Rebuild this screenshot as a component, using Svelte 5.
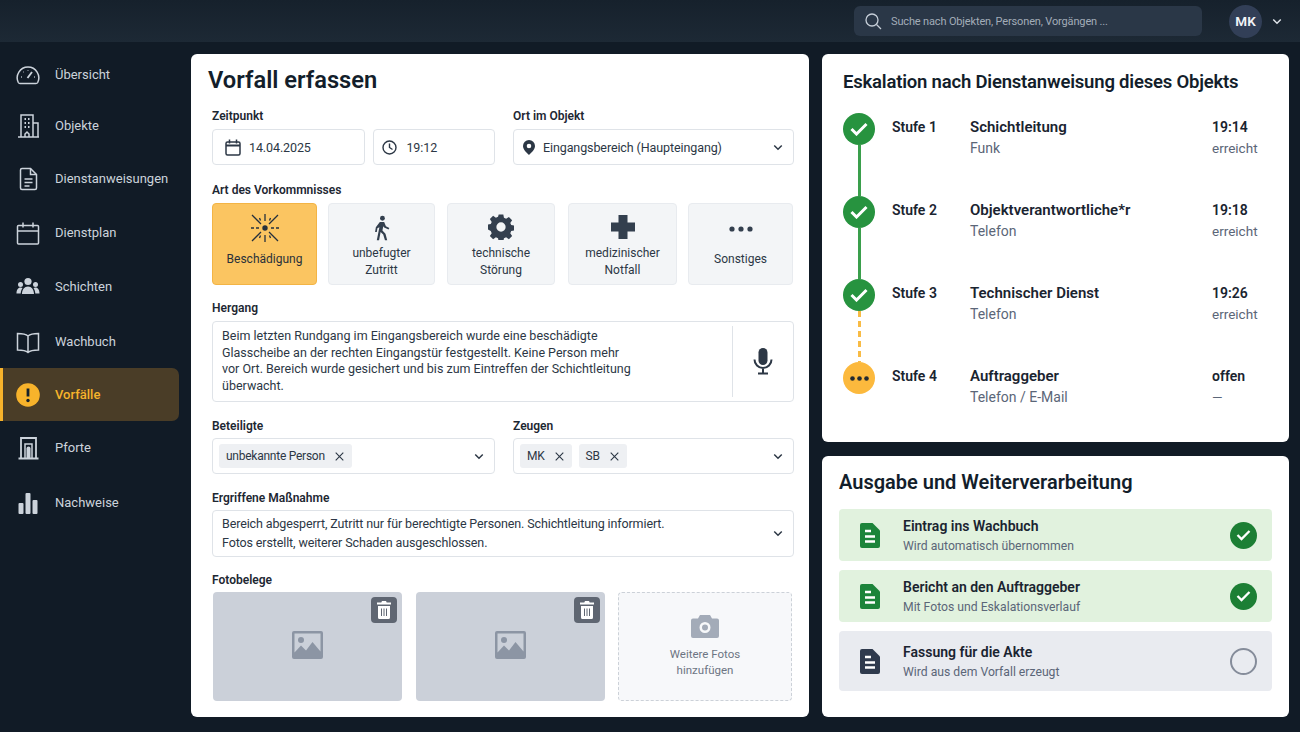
<script>
  const nav = [
    { id: 'gauge', label: 'Übersicht', gap: 0 },
    { id: 'building', label: 'Objekte', gap: -2 },
    { id: 'doc', label: 'Dienstanweisungen', gap: 0 },
    { id: 'cal', label: 'Dienstplan', gap: 1 },
    { id: 'people', label: 'Schichten', gap: 1 },
    { id: 'book', label: 'Wachbuch', gap: 2 },
    { id: 'alert', label: 'Vorfälle', active: true, gap: 0 },
    { id: 'gate', label: 'Pforte', gap: 0 },
    { id: 'bars', label: 'Nachweise', gap: 2 }
  ];

  const kinds = [
    { id: 'burst', lines: ['Beschädigung'], on: true, w: 105, gap: 0 },
    { id: 'walk', lines: ['unbefugter', 'Zutritt'], w: 107, gap: 11 },
    { id: 'gear', lines: ['technische', 'Störung'], w: 108, gap: 12 },
    { id: 'plus', lines: ['medizinischer', 'Notfall'], w: 109, gap: 13 },
    { id: 'dots', lines: ['Sonstiges'], w: 105, gap: 11 }
  ];

  const steps = [
    { n: 'Stufe 1', who: 'Schichtleitung', how: 'Funk', time: '19:14', state: 'erreicht', done: true },
    { n: 'Stufe 2', who: 'Objektverantwortliche*r', how: 'Telefon', time: '19:18', state: 'erreicht', done: true },
    { n: 'Stufe 3', who: 'Technischer Dienst', how: 'Telefon', time: '19:26', state: 'erreicht', done: true },
    { n: 'Stufe 4', who: 'Auftraggeber', how: 'Telefon / E-Mail', time: 'offen', state: '—', done: false }
  ];

  const outputs = [
    { title: 'Eintrag ins Wachbuch', sub: 'Wird automatisch übernommen', done: true, h: 52 },
    { title: 'Bericht an den Auftraggeber', sub: 'Mit Fotos und Eskalationsverlauf', done: true, h: 52 },
    { title: 'Fassung für die Akte', sub: 'Wird aus dem Vorfall erzeugt', done: false, h: 60 }
  ];
</script>

{#snippet chevron()}
  <svg class="chev" width="10" height="7" viewBox="0 0 12 8" fill="none" stroke="currentColor" stroke-width="1.800"><path d="M1.500 1.500 6 6l4.500-4.500" /></svg>
{/snippet}

{#snippet cross()}
  <svg width="9" height="9" viewBox="0 0 9 9" fill="none" stroke="#2c3745" stroke-width="1.100"><path d="m.7.7 7.600 7.600M8.300.7.700 8.300" /></svg>
{/snippet}

{#snippet fileIcon()}
  <svg width="20" height="25" viewBox="0 0 20 25"><path fill="currentColor" d="M2 0h10.500L20 7.500V23a2 2 0 0 1-2 2H2a2 2 0 0 1-2-2V2a2 2 0 0 1 2-2z" /><path fill="none" stroke="#fff" stroke-width="2.400" d="M5 8h6M5 13.500h10M5 18.500h10" /></svg>
{/snippet}

{#snippet navIcon(id)}
  <svg width="26" height="26" viewBox="0 0 26 26" fill="none" stroke="currentColor" stroke-width="1.500">
    {#if id === 'gauge'}
      <path d="M5 21.500h16a2 2 0 0 0 1.700-1A10.800 10.800 0 0 0 13 5 10.800 10.800 0 0 0 3.300 20.500a2 2 0 0 0 1.700 1z" />
      <path d="m12.500 16 4.500-6" stroke-width="1.800" /><path d="M6 15h.8M8.500 10h.5M13 8v.6M20 15h-.8" />
    {:else if id === 'building'}
      <path d="M6 24V2h12v22M18 10h5v14M3 24h21" />
      <path d="M9.500 6h1.500M13 6h1.500M9.500 10h1.500M13 10h1.500M9.500 14h1.500M13 14h1.500" stroke-width="1.800" /><path d="M10 24v-3l2-2 2 2v3" />
    {:else if id === 'doc'}
      <path d="M7 2.500h8.500l6 6V22a1.500 1.500 0 0 1-1.500 1.500H7A1.500 1.500 0 0 1 5.500 22V4A1.500 1.500 0 0 1 7 2.500z" /><path d="M15.500 2.500v6h6M9.500 13h8M9.500 16.500h8M9.500 20h5" />
    {:else if id === 'cal'}
      <path d="M3.500 5.500h19a1 1 0 0 1 1 1V23a1 1 0 0 1-1 1h-19a1 1 0 0 1-1-1V6.500a1 1 0 0 1 1-1zM2.500 11h21M8 2.500v5M18 2.500v5" />
    {:else if id === 'people'}
      <g fill="currentColor" stroke="none"><circle cx="13" cy="7.500" r="3.600" /><circle cx="5.500" cy="10.500" r="2.500" /><circle cx="20.500" cy="10.500" r="2.500" /><path d="M7 20c0-4.500 2.500-7.500 6-7.500s6 3 6 7.500zM1.500 19.500c0-3.500 1.500-6 4-6 .8 0 1.500.2 2 .6-1 1.500-1.700 3.300-1.800 5.400zM24.500 19.500c0-3.500-1.500-6-4-6-.8 0-1.500.2-2 .6 1 1.500 1.700 3.300 1.800 5.400z" /></g>
    {:else if id === 'book'}
      <path d="M13 7c-2-1.800-5-2.500-10.500-2.500V21c5 0 8.500.7 10.500 2.500 2-1.800 5.500-2.500 10.500-2.500V4.500C18 4.500 15 5.200 13 7zM13 7v16.500" />
    {:else if id === 'alert'}
      <circle cx="13" cy="13" r="11.800" fill="#f7b32b" stroke="none" />
      <path d="M13 6.500v8" stroke="#14202c" stroke-width="2.800" /><circle cx="13" cy="18.500" r="1.700" fill="#14202c" stroke="none" />
    {:else if id === 'gate'}
      <path d="M6 23V3h15v20M3.500 23.500h20" stroke-width="1.800" /><path d="M10 23V9h7v14" /><path d="M11.500 23v-9.500a2 2 0 0 1 4 0V23z" fill="currentColor" stroke="none" />
    {:else if id === 'bars'}
      <g fill="currentColor" stroke="none"><rect x="3.500" y="13" width="5" height="11" rx="1" /><rect x="10.500" y="3" width="5" height="21" rx="1" /><rect x="17.500" y="10" width="5" height="14" rx="1" /></g>
    {/if}
  </svg>
{/snippet}

{#snippet kindIcon(id)}
  {#if id === 'burst'}
    <svg width="30" height="30" viewBox="0 0 30 30" fill="none" stroke="#25303c" stroke-width="1.300"><circle cx="15" cy="15" r="2.700" fill="#25303c" stroke="none" /><path d="M15 1v7M15 22v7M1 15h3M6 15h3M21 15h3M26 15h3M2 2l9 9M28 2l-9 9M2 28l9-9M28 28l-9-9M9.500 5l1 2.500M20.500 5l-1 2.500M9.500 25l1-2.500M20.500 25l-1-2.500" /></svg>
  {:else if id === 'walk'}
    <svg width="26" height="26" viewBox="0 0 30 30" fill="#333f4e"><circle cx="15.500" cy="3.800" r="2.800" /><path d="M12.500 8h5l2 5 4 2-1 1.800-5-2.300-1-1.500-1 5 3.500 3.500 2 7.500h-2.600l-2-6.500-3-3-1.800 9.500H9l3-15-2.300 1.300-.7 4.200H7l.9-5.500z" /></svg>
  {:else if id === 'gear'}
    <svg class="up" width="26" height="26" viewBox="0 0 28 28"><path fill="#333f4e" fill-rule="evenodd" d="M11.500 1h5l.7 3.600 2.300 1 3-2 3.500 3.500-2 3 1 2.300 3.500.7v5l-3.500.7-1 2.300 2 3-3.500 3.500-3-2-2.300 1-.7 3.500h-5l-.7-3.500-2.300-1-3 2-3.500-3.500 2-3-1-2.300L-.5 17v-5l3.500-.7 1-2.300-2-3L5.500 2.500l3 2 2.300-1zM14 9.500a5 5 0 1 0 0 10 5 5 0 0 0 0-10z" transform="translate(0 -.5)" /></svg>
  {:else if id === 'plus'}
    <svg class="up" width="26" height="26" viewBox="0 0 26 26"><path fill="#333f4e" d="M8.500 1h9v7.500H25v9h-7.500V25h-9v-7.500H1v-9h7.500z" /></svg>
  {:else}
    <svg width="24" height="26" viewBox="0 0 24 26" fill="#333f4e"><circle cx="3" cy="14" r="2.600" /><circle cx="12" cy="14" r="2.600" /><circle cx="21" cy="14" r="2.600" /></svg>
  {/if}
{/snippet}

{#snippet photo()}
  <div class="photo">
    <button class="trash" aria-label="Foto löschen">
      <svg width="14" height="18" viewBox="0 0 14 18"><path fill="#fff" d="M5 0h4l.7 1.500H14v2H0v-2h4.300zM1 5h12v11.500a1.500 1.500 0 0 1-1.500 1.500h-9A1.500 1.500 0 0 1 1 16.500z" /><path stroke="#5f6672" stroke-width="1" d="M4.500 7.500v7.500M7 7.500v7.500M9.500 7.500v7.500" /></svg>
    </button>
    <svg class="pic" width="31" height="28" viewBox="0 0 31 28"><path fill="#8c95a4" fill-rule="evenodd" d="M2 0h27a2 2 0 0 1 2 2v24a2 2 0 0 1-2 2H2a2 2 0 0 1-2-2V2a2 2 0 0 1 2-2zm.5 2.500v19l6.500-7 5 5 6.500-8.500 8 9.500v-18z" /><circle cx="9" cy="9" r="3" fill="#8c95a4" /></svg>
  </div>
{/snippet}

<div class="shell">
  <header class="top">
    <div class="search">
      <svg width="17" height="17" viewBox="0 0 17 17" fill="none" stroke="#c6ced8" stroke-width="1.300"><circle cx="7" cy="7" r="6" /><path d="m11.500 11.500 4.500 4.500" /></svg>
      <span>Suche nach Objekten, Personen, Vorgängen ...</span>
    </div>
    <div class="avatar">MK</div>
    <span class="topchev">{@render chevron()}</span>
  </header>

  <div class="body">
    <nav class="side">
      {#each nav as item}
        <a class="navitem" class:active={item.active} href="#{item.id}" style="margin-top: {item.gap}px">
          <span class="navicon">{@render navIcon(item.id)}</span>
          <span>{item.label}</span>
        </a>
      {/each}
    </nav>

    <main class="panel form">
      <h1>Vorfall erfassen</h1>

      <div class="row two">
        <div>
          <div class="lab">Zeitpunkt</div>
          <div class="pair">
            <div class="field date">
              <svg width="16" height="17" viewBox="0 0 16 17" fill="none" stroke="#2c3745" stroke-width="1.500"><rect x="1" y="3" width="14" height="13" rx="1.500" /><path d="M1 6.500h14" stroke-width="2" /><path d="M4.500 .5v4M11.500 .5v4" /></svg>
              <span>14.04.2025</span>
            </div>
            <div class="field time">
              <svg width="15" height="15" viewBox="0 0 15 15" fill="none" stroke="#2c3745" stroke-width="1.400"><circle cx="7.500" cy="7.500" r="6.500" /><path d="M7.500 3.500v4l3 2" /></svg>
              <span>19:12</span>
            </div>
          </div>
        </div>
        <div>
          <div class="lab">Ort im Objekt</div>
          <div class="field place">
            <svg width="12" height="15" viewBox="0 0 12 15"><path fill="#2c3745" fill-rule="evenodd" d="M6 0a6 6 0 0 1 6 6c0 3.500-3.500 6.500-6 9-2.500-2.500-6-5.500-6-9a6 6 0 0 1 6-6zm0 3.700a2.300 2.300 0 1 0 0 4.600 2.300 2.300 0 0 0 0-4.600z" /></svg>
            <span>Eingangsbereich (Haupteingang)</span>
            {@render chevron()}
          </div>
        </div>
      </div>

      <div class="lab art">Art des Vorkommnisses</div>
      <div class="kinds">
        {#each kinds as k}
          <button class="kind" class:on={k.on} style="width: {k.w}px; margin-left: {k.gap}px">
            <span class="kicon">{@render kindIcon(k.id)}</span>
            <span class="ktext" class:one={k.lines.length === 1}>{#each k.lines as l}<span>{l}</span>{/each}</span>
          </button>
        {/each}
      </div>

      <div class="lab story">Hergang</div>
      <div class="storybox">
        <p>Beim letzten Rundgang im Eingangsbereich wurde eine beschädigte<br />Glasscheibe an der rechten Eingangstür festgestellt. Keine Person mehr<br />vor Ort. Bereich wurde gesichert und bis zum Eintreffen der Schichtleitung<br />überwacht.</p>
        <div class="mic">
          <svg width="20" height="27" viewBox="0 0 20 27"><rect x="5.500" y="0" width="9" height="17" rx="4.500" fill="#2c3745" /><path d="M1.500 11.500a8.500 8.500 0 0 0 17 0M10 20v5M5 25.500h10" fill="none" stroke="#2c3745" stroke-width="2" /></svg>
        </div>
      </div>

      <div class="row two people">
        <div>
          <div class="lab">Beteiligte</div>
          <div class="field tags">
            <span class="tag">unbekannte Person {@render cross()}</span>
            {@render chevron()}
          </div>
        </div>
        <div>
          <div class="lab">Zeugen</div>
          <div class="field tags">
            <span class="tag">MK {@render cross()}</span>
            <span class="tag">SB {@render cross()}</span>
            {@render chevron()}
          </div>
        </div>
      </div>

      <div class="lab measure">Ergriffene Maßnahme</div>
      <div class="measurebox">
        <p>Bereich abgesperrt, Zutritt nur für berechtigte Personen. Schichtleitung informiert.<br />Fotos erstellt, weiterer Schaden ausgeschlossen.</p>
        {@render chevron()}
      </div>

      <div class="lab fotos">Fotobelege</div>
      <div class="photos">
        {@render photo()}
        {@render photo()}
        <div class="addphoto">
          <svg width="28" height="23" viewBox="0 0 28 23"><path fill="#a3abb8" fill-rule="evenodd" d="M9 0h10l2 3.500h5a2 2 0 0 1 2 2V21a2 2 0 0 1-2 2H2a2 2 0 0 1-2-2V5.500a2 2 0 0 1 2-2h5zm5 7a5.500 5.500 0 1 0 0 11 5.500 5.500 0 0 0 0-11zm0 2.500a3 3 0 1 1 0 6 3 3 0 0 1 0-6z" /></svg>
          <span>Weitere Fotos<br />hinzufügen</span>
        </div>
      </div>
    </main>

    <div class="right">
      <section class="panel esc">
        <h2>Eskalation nach Dienstanweisung dieses Objekts</h2>
        <div class="steps">
          {#each steps as s, i}
            <div class="step">
              <div class="rail">
                <span class="node" class:open={!s.done}>
                  {#if s.done}
                    <svg width="18" height="14" viewBox="0 0 18 14" fill="none" stroke="#fff" stroke-width="3"><path d="m1.500 7 5 5 10-10" /></svg>
                  {:else}
                    <svg width="19" height="5" viewBox="0 0 19 5" fill="#232a31"><circle cx="2.500" cy="2.500" r="2.300" /><circle cx="9.500" cy="2.500" r="2.300" /><circle cx="16.500" cy="2.500" r="2.300" /></svg>
                  {/if}
                </span>
                {#if i < steps.length - 1}
                  <span class="link" class:dashed={i === 2}></span>
                {/if}
              </div>
              <div class="stufe">{s.n}</div>
              <div class="who"><b>{s.who}</b><small>{s.how}</small></div>
              <div class="when"><b>{s.time}</b><small>{s.state}</small></div>
            </div>
          {/each}
        </div>
      </section>

      <section class="panel out">
        <h2>Ausgabe und Weiterverarbeitung</h2>
        <div class="outs">
          {#each outputs as o}
            <div class="outrow" class:done={o.done} style="height: {o.h}px">
              <span class="outicon">{@render fileIcon()}</span>
              <div class="outtext"><b>{o.title}</b><small>{o.sub}</small></div>
              {#if o.done}
                <span class="tick"><svg width="15" height="12" viewBox="0 0 15 12" fill="none" stroke="#fff" stroke-width="2.300"><path d="m1.500 6 4 4 8-8" /></svg></span>
              {:else}
                <span class="ring"></span>
              {/if}
            </div>
          {/each}
        </div>
      </section>
    </div>
  </div>
</div>

<style>
  :global(body) {
    margin: 0;
    background: #101a25;
    overflow: hidden;
  }

  .shell {
    width: 1300px;
    height: 732px;
    overflow: hidden;
    background: #111b26;
    font-family: Roboto, "Liberation Sans", sans-serif;
    color: #1a2430;
  }

  small {
    display: block;
    font-size: 14px;
  }

  /* top bar */
  .top {
    height: 42px;
    display: flex;
    align-items: center;
    background: linear-gradient(#16212c, #1d2935);
    box-sizing: border-box;
    padding-left: 854px;
  }

  .search {
    width: 348px;
    height: 30px;
    box-sizing: border-box;
    padding-left: 11px;
    display: flex;
    align-items: center;
    gap: 9px;
    background: #2a3747;
    border-radius: 6px;
    color: #a2acb8;
    font-size: 11px;
    letter-spacing: -0.15px;
  }

  .avatar {
    width: 33px;
    height: 33px;
    margin-left: 27px;
    border-radius: 50%;
    background: #323f57;
    color: #f2f4f7;
    font-size: 13.500px;
    font-weight: 600;
    display: flex;
    align-items: center;
    justify-content: center;
  }

  .topchev {
    margin-left: 10px;
    color: #dfe4ea;
    display: flex;
  }

  .body {
    display: flex;
    align-items: flex-start;
  }

  /* sidebar */
  .side {
    width: 191px;
    flex: none;
    padding-top: 6px;
  }

  .navitem {
    height: 53px;
    width: 179px;
    box-sizing: border-box;
    display: flex;
    align-items: center;
    gap: 14px;
    padding-left: 15px;
    color: #ccd3db;
    font-size: 13px;
    text-decoration: none;
  }

  .navicon {
    display: flex;
  }

  .navitem.active {
    background: #4a3d27;
    border-left: 3px solid #f7b32b;
    padding-left: 12px;
    border-radius: 0 7px 7px 0;
    color: #f7b32b;
    font-weight: 500;
  }

  .panel {
    background: #fff;
    border-radius: 6px;
    box-sizing: border-box;
  }

  /* form */
  .form {
    width: 618px;
    height: 663px;
    margin-top: 12px;
    padding: 0 15px 0 21px;
    flex: none;
  }

  h1 {
    margin: 0 0 0 -4px;
    padding-top: 11px;
    font-size: 23.700px;
    line-height: 30px;
    font-weight: 600;
    color: #131e2b;
  }

  .lab {
    font-size: 12px;
    font-weight: 600;
    line-height: 16px;
    color: #1d2732;
  }

  .row.two {
    display: grid;
    grid-template-columns: 283px 281px;
    gap: 18px;
    margin-top: 13px;
  }

  .row .lab {
    margin-bottom: 5px;
  }

  .pair {
    display: flex;
    gap: 8px;
  }

  .field {
    height: 36px;
    box-sizing: border-box;
    border: 1px solid #dfe3e8;
    border-radius: 4px;
    display: flex;
    align-items: center;
    font-size: 12.500px;
    letter-spacing: -0.1px;
    color: #2c3745;
    background: #fff;
  }

  .date {
    width: 154px;
    padding-left: 12px;
    gap: 8px;
  }

  .time {
    width: 122px;
    padding-left: 8px;
    gap: 9px;
  }

  .place {
    padding: 0 10px 0 9px;
    gap: 8px;
  }

  .place span {
    flex: 1;
  }

  .chev {
    flex: none;
    color: #2c3745;
  }

  .topchev .chev {
    color: #dfe4ea;
  }

  .art {
    margin-top: 17px;
  }

  .kinds {
    display: flex;
    margin-top: 5px;
  }

  .kind {
    height: 82px;
    padding: 0;
    box-sizing: border-box;
    border: 1px solid #e8ebef;
    border-radius: 4px;
    background: #f3f5f7;
    font: inherit;
    font-size: 12px;
    color: #2c3745;
    display: flex;
    flex-direction: column;
    align-items: center;
  }

  .kind.on {
    background: #fbc561;
    border-color: #f3b445;
    color: #29313a;
  }

  .kicon {
    height: 30px;
    margin-top: 9px;
    display: flex;
    align-items: center;
  }

  .kicon :global(svg.up) {
    margin-top: -2px;
  }

  .ktext {
    flex: 1;
    display: flex;
    flex-direction: column;
    justify-content: center;
    line-height: 17px;
    margin-bottom: 3px;
  }

  .ktext.one {
    margin-bottom: 9px;
  }

  .story {
    margin-top: 15px;
  }

  .storybox {
    margin-top: 5px;
    height: 81px;
    box-sizing: border-box;
    border: 1px solid #dfe3e8;
    border-radius: 4px;
    display: flex;
  }

  .storybox p {
    margin: 0;
    flex: 1;
    padding: 6px 0 0 9px;
    font-size: 12.500px;
    line-height: 16.500px;
    color: #2c3745;
  }

  .mic {
    width: 60px;
    margin: 4px 0;
    border-left: 1px solid #dfe3e8;
    display: flex;
    align-items: center;
    justify-content: center;
  }

  .row.two.people {
    margin-top: 16px;
  }

  .people .lab {
    margin-bottom: 4px;
  }

  .tags {
    padding: 0 10px 0 6px;
    gap: 7px;
  }

  .tags .chev {
    margin-left: auto;
  }

  .tag {
    height: 24px;
    padding: 0 8px 0 7px;
    background: #eef0f3;
    border-radius: 3px;
    display: flex;
    align-items: center;
    gap: 10px;
    font-size: 12px;
    letter-spacing: -0.25px;
    white-space: nowrap;
  }

  .measure {
    margin-top: 16px;
  }

  .measurebox {
    margin-top: 4px;
    height: 47px;
    box-sizing: border-box;
    border: 1px solid #dfe3e8;
    border-radius: 4px;
    padding: 0 10px 0 9px;
    display: flex;
    align-items: center;
    justify-content: space-between;
  }

  .measurebox p {
    margin: 0;
    font-size: 12.500px;
    letter-spacing: -0.12px;
    line-height: 18.500px;
    color: #2c3745;
  }

  .fotos {
    margin-top: 15px;
  }

  .photos {
    margin: 4px 1px 0;
    display: grid;
    grid-template-columns: 189px 189px 174px;
    gap: 14px 13.500px;
  }

  .photo {
    position: relative;
    height: 109px;
    background: #cbd0d9;
    border-radius: 4px;
    display: flex;
    align-items: center;
    justify-content: center;
  }

  .photo :global(svg.pic) {
    margin-top: -3px;
  }

  .trash {
    position: absolute;
    top: 5px;
    right: 5px;
    width: 26px;
    height: 26px;
    padding: 0;
    border: 0;
    border-radius: 4px;
    background: #5f6672;
    display: flex;
    align-items: center;
    justify-content: center;
  }

  .addphoto {
    height: 109px;
    box-sizing: border-box;
    border: 1px dashed #ccd1d8;
    border-radius: 4px;
    background: #f7f8fa;
    display: flex;
    flex-direction: column;
    align-items: center;
    justify-content: center;
    gap: 8px;
    font-size: 11.500px;
    line-height: 16px;
    text-align: center;
    color: #6d7583;
  }

  /* right column */
  .right {
    width: 467px;
    margin: 12px 0 0 13px;
    flex: none;
    display: flex;
    flex-direction: column;
    gap: 14px;
  }

  h2 {
    margin: 0;
    font-weight: 600;
    color: #131e2b;
    white-space: nowrap;
  }

  .esc {
    height: 388px;
    padding: 16px 32px 0 21px;
  }

  .esc h2 {
    font-size: 18.500px;
    letter-spacing: -0.2px;
    line-height: 24px;
  }

  .steps {
    margin-top: 19px;
  }

  .step {
    height: 83px;
    display: grid;
    grid-template-columns: 32px 95px 242px 1fr;
  }

  .rail {
    display: flex;
    flex-direction: column;
    align-items: center;
  }

  .node {
    width: 32px;
    height: 32px;
    flex: none;
    border-radius: 50%;
    background: #27933f;
    display: flex;
    align-items: center;
    justify-content: center;
  }

  .node.open {
    background: #fcb93d;
  }

  .link {
    flex: 1;
    width: 3px;
    background: #3a9f4c;
  }

  .link.dashed {
    background: repeating-linear-gradient(#f8bb45 0 6px, transparent 6px 10px);
  }

  .stufe {
    margin: 4px 0 0 17px;
    font-size: 14px;
    font-weight: 600;
    line-height: 20px;
    color: #1a2430;
  }

  .who,
  .when {
    margin-top: 4px;
  }

  .who b,
  .when b {
    display: block;
    font-size: 15px;
    font-weight: 600;
    line-height: 20px;
    color: #1a2430;
  }

  .when b {
    font-size: 14px;
  }

  .who small,
  .when small {
    margin-top: 1px;
    line-height: 20px;
    color: #5b6678;
  }

  .when small {
    font-size: 13.500px;
  }

  .out {
    height: 261px;
    padding: 12px 17px 0;
  }

  .out h2 {
    font-size: 20px;
    line-height: 28px;
  }

  .outs {
    margin-top: 13px;
    display: flex;
    flex-direction: column;
    gap: 9px;
  }

  .outrow {
    box-sizing: border-box;
    padding: 0 15px 0 21px;
    display: flex;
    align-items: center;
    background: #e9ebf0;
    border-radius: 4px;
    color: #2f3a4d;
  }

  .outrow.done {
    background: #e1f2de;
    color: #1c843a;
  }

  .outicon {
    display: flex;
    width: 43px;
    flex: none;
  }

  .outtext {
    flex: 1;
    padding-top: 2px;
  }

  .outtext b {
    display: block;
    font-size: 14px;
    font-weight: 600;
    line-height: 19px;
    color: #1a2430;
  }

  .outtext small {
    font-size: 12.200px;
    line-height: 20px;
    color: #5b6678;
  }

  .tick,
  .ring {
    width: 27px;
    height: 27px;
    box-sizing: border-box;
    border-radius: 50%;
    flex: none;
    display: flex;
    align-items: center;
    justify-content: center;
  }

  .tick {
    background: #1c7f34;
  }

  .ring {
    border: 2px solid #858c9a;
  }
</style>
